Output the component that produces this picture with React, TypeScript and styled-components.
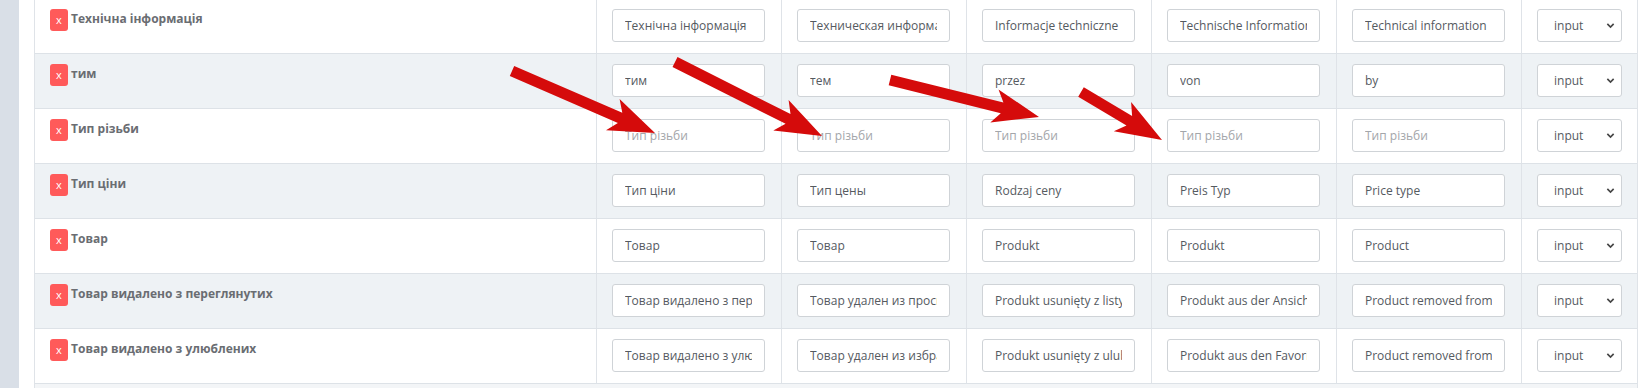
import React from 'react';
import styled, {createGlobalStyle} from 'styled-components';

const GlobalStyle = createGlobalStyle`
  html, body {
    margin: 0;
    padding: 0;
    background: #ffffff;
    overflow: hidden;
    font-family: "Open Sans", "Noto Sans", sans-serif;
  }
`;

type Row = {
  label: string;
  values: string[];
  placeholder?: string;
};

const rows: Row[] = [
  {label: 'Технічна інформація', values: ['Технічна інформація', 'Техническая информация', 'Informacje techniczne', 'Technische Information', 'Technical information']},
  {label: 'тим', values: ['тим', 'тем', 'przez', 'von', 'by']},
  {label: 'Тип різьби', values: ['', '', '', '', ''], placeholder: 'Тип різьби'},
  {label: 'Тип ціни', values: ['Тип ціни', 'Тип цены', 'Rodzaj ceny', 'Preis Typ', 'Price type']},
  {label: 'Товар', values: ['Товар', 'Товар', 'Produkt', 'Produkt', 'Product']},
  {label: 'Товар видалено з переглянутих', values: ['Товар видалено з переглянутих', 'Товар удален из просмотренных', 'Produkt usunięty z listy przeglądanych', 'Produkt aus der Ansicht entfernt', 'Product removed from viewed']},
  {label: 'Товар видалено з улюблених', values: ['Товар видалено з улюблених', 'Товар удален из избранного', 'Produkt usunięty z ulubionych', 'Produkt aus den Favoriten entfernt', 'Product removed from favorites']},
];

// arrows drawn over the table: [tailX, tailY, tipX, tipY]
const arrows: [number, number, number, number][] = [
  [512, 71, 655, 133],
  [675, 62, 822, 136],
  [890, 80, 1039, 117],
  [1081, 92, 1162, 140],
];

function arrowPoints([x1, y1, x2, y2]: [number, number, number, number]) {
  const dx = x2 - x1;
  const dy = y2 - y1;
  const len = Math.hypot(dx, dy);
  const ux = dx / len;
  const uy = dy / len;
  const px = -uy;
  const py = ux;
  const shaft = 5.5;
  const headLen = 46;
  const neck = 38;
  const wing = 17;
  const at = (along: number, perp: number) =>
      `${(x2 + ux * along + px * perp).toFixed(1)},${(y2 + uy * along + py * perp).toFixed(1)}`;
  return [
    at(-len, -shaft),
    at(-neck, -shaft),
    at(-headLen, -wing),
    at(0, 0),
    at(-headLen, wing),
    at(-neck, shaft),
    at(-len, shaft),
  ].join(' ');
}

function App() {
  return (
      <>
        <GlobalStyle/>
        <Page>
          <Sidebar/>
          <Main>
            <Table>
              {rows.map((row, i) => (
                  <TableRow key={row.label} $striped={i % 2 === 1}>
                    <LabelCell>
                      <RemoveBadge>x</RemoveBadge>
                      <Label>{row.label}</Label>
                    </LabelCell>
                    {row.values.map((v, j) => (
                        <Cell key={j}>
                          <TextInput type="text" defaultValue={v} placeholder={row.placeholder}/>
                        </Cell>
                    ))}
                    <Cell>
                      <SelectWrap>
                        <TypeSelect defaultValue="input">
                          <option value="input">input</option>
                          <option value="textarea">textarea</option>
                        </TypeSelect>
                        <Chevron viewBox="0 0 10 10">
                          <path d="M1.5 3.2 L5 6.7 L8.5 3.2" fill="none" stroke="#444" strokeWidth="1.8"/>
                        </Chevron>
                      </SelectWrap>
                    </Cell>
                  </TableRow>
              ))}
              <NextRow/>
            </Table>
          </Main>
          <Annotations width="1651" height="388">
            {arrows.map((a, i) => (
                <polygon key={i} points={arrowPoints(a)} fill="#d50b0b"/>
            ))}
          </Annotations>
        </Page>
      </>
  );
}

const Page = styled.div`
  position: relative;
  display: flex;
  height: 388px;
  overflow: hidden;
`;

const Sidebar = styled.div`
  width: 19px;
  flex: none;
  background: #d9dfe7;
`;

const Main = styled.div`
  flex: 1;
  padding-left: 15px;
`;

const Table = styled.div`
  width: 1604px;
  margin-top: -1px;
  border-left: 1px solid #dfe3e8;
  border-right: 1px solid #dfe3e8;
  box-sizing: border-box;
`;

const TableRow = styled.div<{ $striped: boolean }>`
  display: grid;
  grid-template-columns: 561px repeat(5, 185px) 117px;
  background: ${p => p.$striped ? '#eef2f5' : '#ffffff'};
  border-bottom: 1px solid #dde2e7;
`;

const NextRow = styled.div`
  height: 20px;
  background: #f3f5f7;
`;

const LabelCell = styled.div`
  display: flex;
  align-items: flex-start;
  gap: 3px;
  padding: 10px 15px 11px;
`;

const RemoveBadge = styled.span`
  width: 18px;
  height: 22px;
  flex: none;
  border-radius: 3px;
  background: #ff5a5a;
  color: #ffffff;
  font-size: 11px;
  line-height: 21px;
  text-align: center;
`;

const Label = styled.span`
  font-size: 12px;
  font-weight: 700;
  color: #6a6d72;
  line-height: 20px;
`;

const Cell = styled.div`
  border-left: 1px solid #dfe3e8;
  padding: 10px 16px 11px 15px;
`;

const TextInput = styled.input`
  display: block;
  width: 100%;
  height: 33px;
  box-sizing: border-box;
  padding: 0 12px;
  border: 1px solid #cfd3d7;
  border-radius: 3px;
  background: #ffffff;
  font-family: "Open Sans", "Noto Sans", sans-serif;
  font-size: 12px;
  color: #555a5f;
  outline: none;

  &::placeholder {
    color: #a3a6aa;
  }
`;

const SelectWrap = styled.div`
  position: relative;
`;

const TypeSelect = styled.select`
  display: block;
  width: 100%;
  height: 33px;
  box-sizing: border-box;
  padding: 0 16px;
  border: 1px solid #cfd3d7;
  border-radius: 3px;
  background: #ffffff;
  appearance: none;
  font-family: "Open Sans", "Noto Sans", sans-serif;
  font-size: 12px;
  color: #555a5f;
  outline: none;
`;

const Chevron = styled.svg`
  position: absolute;
  right: 7px;
  top: 12px;
  width: 9px;
  height: 9px;
  pointer-events: none;
`;

const Annotations = styled.svg`
  position: absolute;
  left: 0;
  top: 0;
  pointer-events: none;
`;

export default App;
